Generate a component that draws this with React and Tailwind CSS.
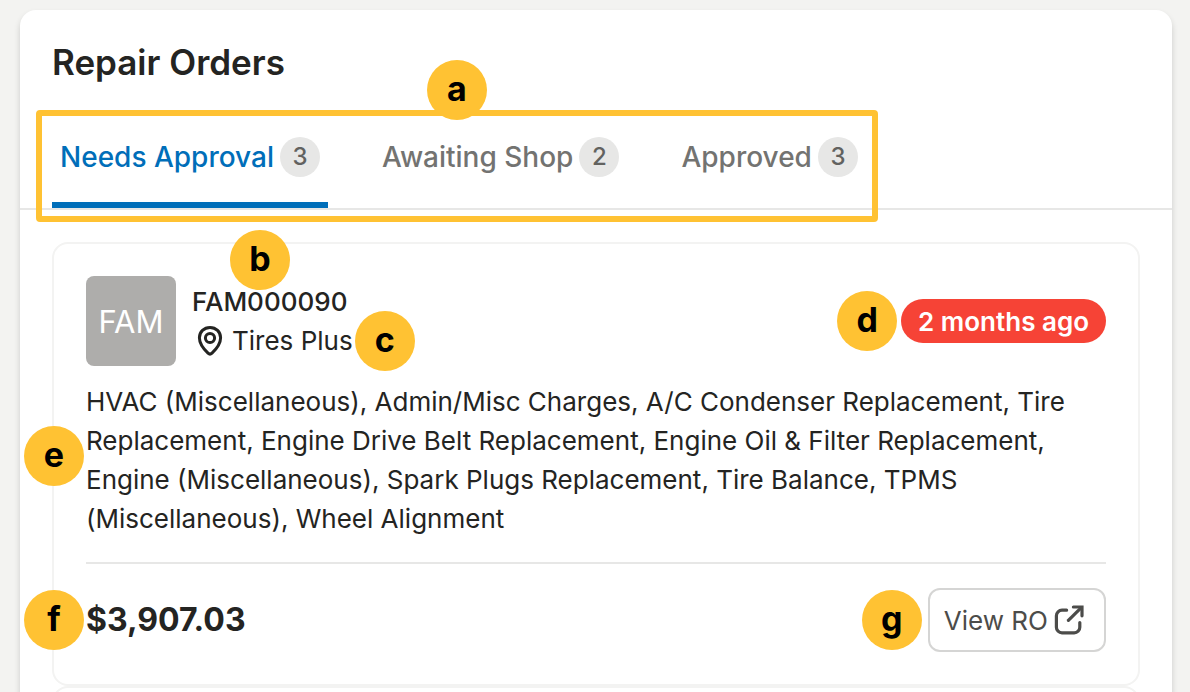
import React, { useState } from "react";

const tabs = [
  { id: "needs", label: "Needs Approval", count: 3 },
  { id: "awaiting", label: "Awaiting Shop", count: 2 },
  { id: "approved", label: "Approved", count: 3 },
];

const order = {
  id: "FAM000090",
  initials: "FAM",
  shop: "Tires Plus",
  age: "2 months ago",
  services: [
    "HVAC (Miscellaneous)",
    "Admin/Misc Charges",
    "A/C Condenser Replacement",
    "Tire Replacement",
    "Engine Drive Belt Replacement",
    "Engine Oil & Filter Replacement",
    "Engine (Miscellaneous)",
    "Spark Plugs Replacement",
    "Tire Balance",
    "TPMS (Miscellaneous)",
    "Wheel Alignment",
  ],
  total: "$3,907.03",
};

// lettered callout that floats over the element it describes
function Callout({ letter, className }) {
  return (
    <span
      className={`absolute z-10 flex h-[60px] w-[60px] items-center justify-center rounded-full bg-[#ffc233] pb-[2px] text-[34px] leading-10 font-bold text-black ${className}`}
    >
      {letter}
    </span>
  );
}

function PinIcon() {
  return (
    <svg
      className="h-9 w-9 shrink-0"
      viewBox="0 0 36 36"
      fill="none"
      stroke="currentColor"
      strokeWidth="3"
      strokeLinejoin="round"
      aria-hidden="true"
    >
      <path d="M18 4.4c-6 0-10.6 4.6-10.6 10.4 0 6.2 4.6 11.6 8.6 15.4 1.2 1.1 2.8 1.1 4 0 4-3.8 8.6-9.2 8.6-15.4C28.6 9 24 4.4 18 4.4Z" />
      <circle cx="18" cy="15" r="4.6" />
    </svg>
  );
}

function ExternalIcon() {
  return (
    <svg
      className="h-[30px] w-[30px] shrink-0"
      viewBox="0 0 30 30"
      fill="none"
      stroke="currentColor"
      strokeWidth="3.2"
      strokeLinecap="round"
      aria-hidden="true"
    >
      <path d="M12.6 5.2H8A5.6 5.6 0 0 0 2.4 10.8v11.4A5.6 5.6 0 0 0 8 27.8h12.2a5.6 5.6 0 0 0 5.6-5.6v-4.6" />
      <path d="M14.4 15.4 27 2.8" />
      <path d="M19.4 2h8.6v8.8" />
    </svg>
  );
}

function OrderCard() {
  return (
    <article className="rounded-2xl border-2 border-[#f3f3f2] bg-white p-8">
      <div className="flex items-center justify-between">
        <div className="flex items-center gap-4">
          <div className="flex h-[90px] w-[90px] items-center justify-center rounded-lg bg-[#aeadab] pt-[2px] text-[31px] text-white">
            {order.initials}
          </div>
          <div className="text-[26px] leading-[39px]">
            <div className="relative font-medium">
              {order.id}
              <Callout letter="b" className="bottom-full left-[38px] -mb-2" />
            </div>
            <div className="relative flex items-center gap-1">
              <PinIcon />
              {order.shop}
              <Callout letter="c" className="left-full ml-[2px]" />
            </div>
          </div>
        </div>
        <div className="relative flex h-11 items-center rounded-full bg-[#f64336] px-[17px] text-[26px] font-semibold text-white">
          <Callout letter="d" className="right-full mr-1" />
          {order.age}
        </div>
      </div>

      <div className="relative mt-4">
        <Callout letter="e" className="top-11 right-full mr-[2px]" />
        <p className="text-[26px] leading-[39px]">
          {order.services.join(", ")}
        </p>
      </div>

      <div className="mt-6 flex items-center justify-between border-t-2 border-[#e7e7e6] pt-6">
        <div className="relative flex items-center text-[32px] font-bold">
          <Callout letter="f" className="right-full mr-[2px]" />
          {order.total}
        </div>
        <div className="relative flex items-center">
          <Callout letter="g" className="right-full mr-[6px]" />
          <button
            type="button"
            className="flex h-16 items-center gap-[6px] rounded-xl border-2 border-[#d5d5d4] bg-white pr-5 pl-[14px] text-[26px] text-[#4c4c4a]"
          >
            View RO
            <ExternalIcon />
          </button>
        </div>
      </div>
    </article>
  );
}

export default function App() {
  const [active, setActive] = useState("needs");

  return (
    <div className="h-screen overflow-hidden bg-[#f3f3f1] pt-[10px] pr-[18px] pl-5 font-['Inter',sans-serif] text-[#242422]">
      <main className="min-h-screen rounded-2xl bg-white shadow-[0_4px_6px_rgba(0,0,0,0.16)]">
        <h1 className="px-8 pt-7 text-[35px] leading-12 font-semibold">
          Repair Orders
        </h1>

        {/* Tabs */}
        <div className="mt-6 border-b-2 border-[#e7e7e6] px-8">
          <div role="tablist" className="relative flex w-fit gap-[46px]">
            {tabs.map((tab) => (
              <button
                key={tab.id}
                type="button"
                role="tab"
                aria-selected={active === tab.id}
                onClick={() => setActive(tab.id)}
                className={`flex items-center gap-[6px] border-b-[6px] px-2 pt-[27px] pb-[25px] text-[28px] leading-10 font-medium ${
                  active === tab.id
                    ? "border-[#006eb9] text-[#006eb9]"
                    : "border-transparent text-[#737371]"
                }`}
              >
                {tab.label}
                <span className="flex h-10 w-10 items-center justify-center rounded-full bg-[#e7e7e6] text-[24px] text-[#62625f]">
                  {tab.count}
                </span>
              </button>
            ))}
            <div className="pointer-events-none absolute top-0 -right-3 -bottom-[14px] -left-4 flex justify-center rounded border-[6px] border-[#ffc233]">
              <Callout letter="a" className="bottom-full -mb-1" />
            </div>
          </div>
        </div>

        {/* Orders */}
        <div className="bg-white px-8 pt-8">
          <OrderCard />
          <div className="h-20 rounded-2xl border-2 border-[#f3f3f2]" />
        </div>
      </main>
    </div>
  );
}
